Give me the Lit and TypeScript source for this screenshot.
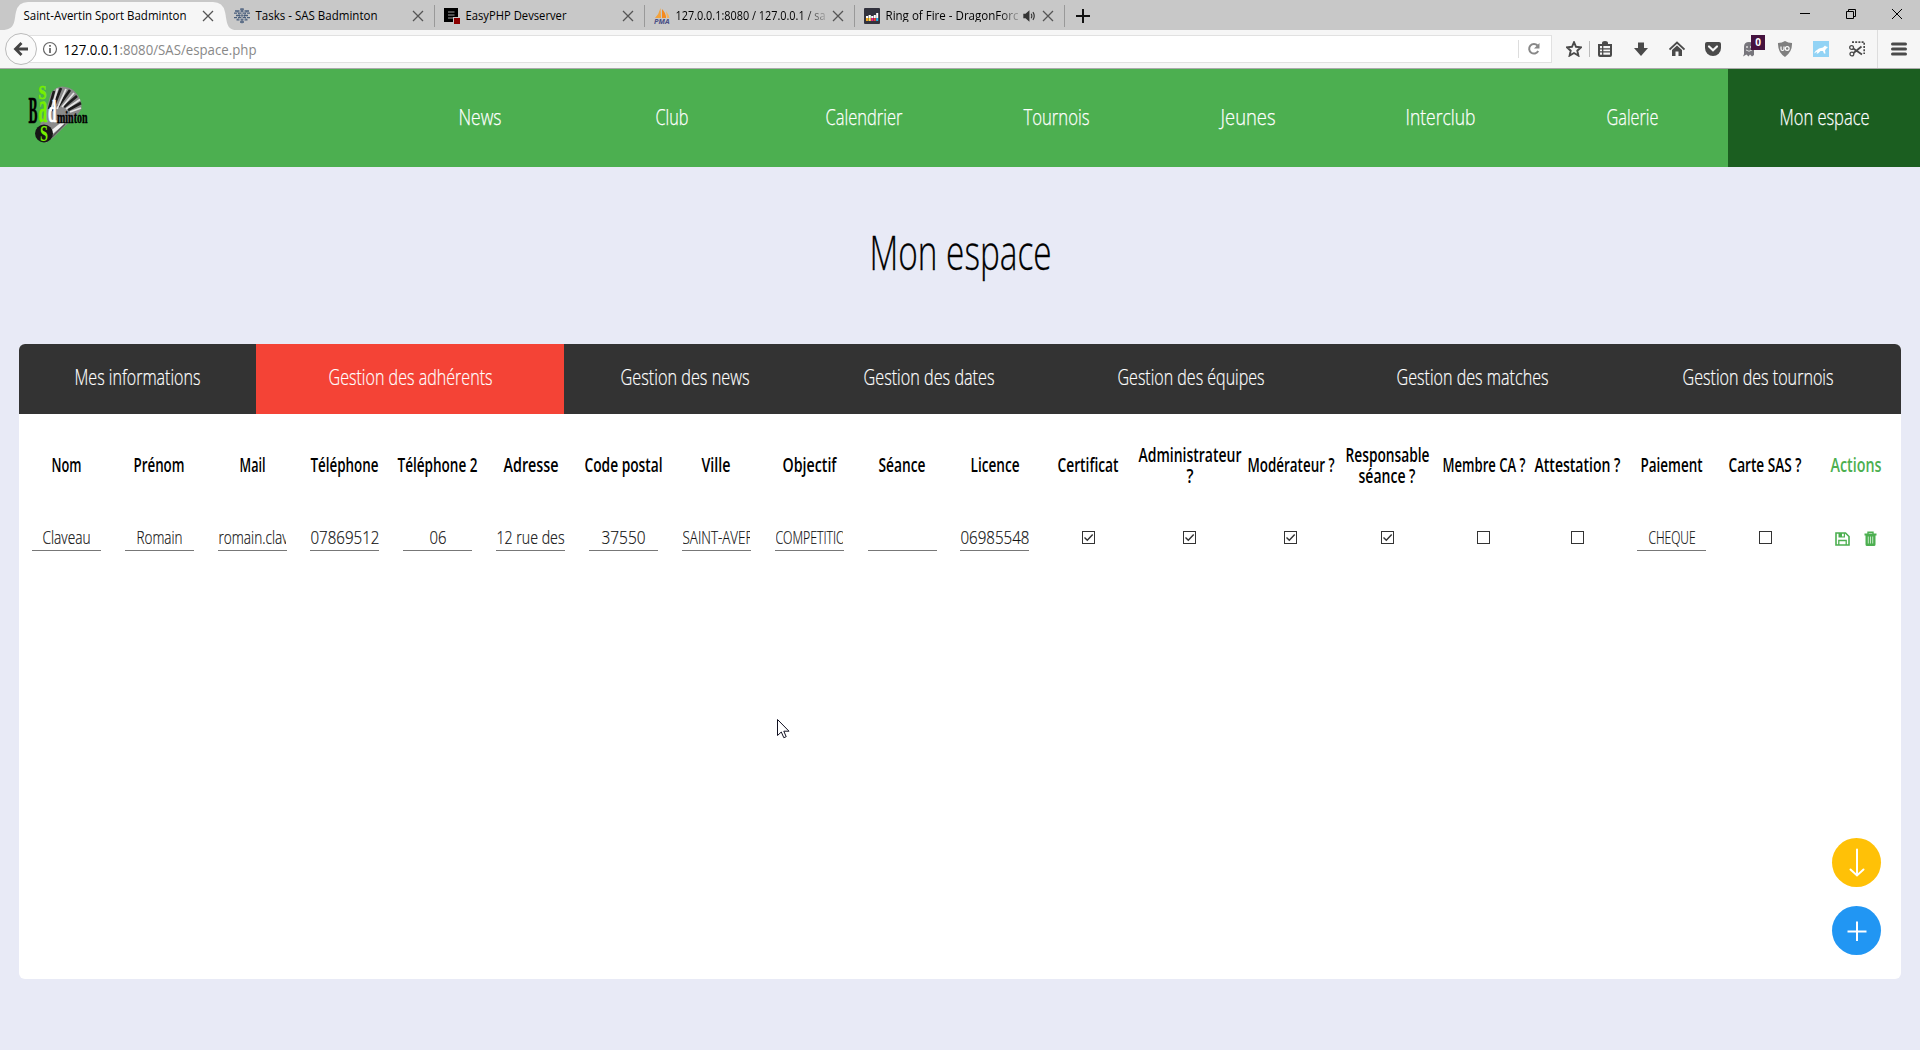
import { LitElement, html, svg, css } from "lit";
import { customElement } from "lit/decorators.js";

// A single line of condensed text: capitals are vertically centred in the box.
const fit = (text: string, w: number, size: number, cls = "", clip = 0) => html`<svg
  class="fit ${cls} ${clip ? "clip" : ""}" width=${clip || w} height=${Math.round(size)}>
  <text x="-0.5" y=${(size * 0.86).toFixed(2)} font-size=${size} textLength=${w + 1} lengthAdjust="spacingAndGlyphs">${text}</text>
</svg>`;

const icon = (body: unknown, s = 16, cls = "") =>
  html`<svg class="icon ${cls}" width=${s} height=${s} viewBox="0 0 16 16">${body}</svg>`;

const cross = icon(svg`<path d="M3 3L13 13M13 3L3 13" stroke="#555" stroke-width="1.3" fill="none"/>`);

const favTasks = icon(svg`<g fill="none" stroke="#4a5f7d" stroke-width="1.300">
  <path d="M6 1.200H10M1 3H5.500M6.500 3H9.500M10.500 3H15M0 5.200H3M4 5.200H7M9 5.200H12M13 5.200H16M2 7.500H6.500M7.300 7.500H8.700M9.500 7.500H14M0 9.700H3M4 9.700H7M9 9.700H12M13 9.700H16M2.500 11.800H5.500M6.500 11.800H9.500M10.500 11.800H13.500M6 14H10"/>
  <path d="M8 0V15.500M3 3L6 8L3 12M13 3L10 8L13 12" stroke-width="0.700"/></g>`);
const favPhp = icon(svg`<path d="M0 0H14V9H9V14H0Z" fill="#000"/><path d="M4 4H10.500M4 7H10.500M4 10H9" stroke="#c8c8c8" stroke-width="0.800"/><rect x="10" y="10" width="6" height="6" fill="#8b0000"/>`);
const favPma = icon(svg`<path d="M6.500 0L7 10H1Q5 6 6.500 0Z" fill="#f2a23c"/><path d="M8 1Q12 5 12 10H8Z" fill="#f58a1f"/><path d="M12 3Q15 7 15.500 10H13Z" fill="#f7b45c"/>
  <text x="0" y="16" font-size="6.200" font-weight="700" font-style="italic" fill="#4a4f86" textLength="15.500" lengthAdjust="spacingAndGlyphs">PMA</text>`);
const favDeezer = icon(svg`<rect width="16" height="16" rx="1" fill="#32323d"/>
  <g fill="#fff"><rect x="2" y="8" width="2.200" height="2"/><rect x="4.600" y="7" width="2.200" height="3"/><rect x="7.200" y="8" width="2.200" height="2"/><rect x="9.800" y="7" width="2" height="3"/><rect x="12.200" y="5" width="2" height="5"/></g>
  <g><rect x="2" y="10" width="2.200" height="3" fill="#f5a623"/><rect x="4.600" y="10" width="2.200" height="3" fill="#ffe14d"/><rect x="7.200" y="10" width="2.200" height="3" fill="#e5218a"/><rect x="9.800" y="10" width="2" height="3" fill="#e8402e"/><rect x="12.200" y="10" width="2" height="3" fill="#27b4e8"/></g>`);
const speaker = icon(svg`<path d="M1.500 5.500H4L8.500 1.500V14.500L4 10.500H1.500Z" fill="#333"/><path d="M10.500 5.500Q12 8 10.500 10.500M12.500 3.500Q15.500 8 12.500 12.500" stroke="#333" stroke-width="1.300" fill="none"/>`, 14);

interface Tab { label: string; w: number; fav?: unknown; active?: boolean; fade?: boolean; sound?: boolean; }
const TABS: Tab[] = [
  { label: "Saint-Avertin Sport Badminton", w: 162, active: true },
  { label: "Tasks - SAS Badminton", w: 121, fav: favTasks },
  { label: "EasyPHP Devserver", w: 100, fav: favPhp },
  { label: "127.0.0.1:8080 / 127.0.0.1 / sa", w: 149, fav: favPma, fade: true },
  { label: "Ring of Fire - DragonForc", w: 132, fav: favDeezer, fade: true, sound: true },
];

@customElement("browser-chrome")
class BrowserChrome extends LitElement {
  static styles = css`
    :host { display: block; font-family: "Open Sans", "Noto Sans", sans-serif; }
    .fit { display: block; overflow: visible; flex: none; }
    .icon { display: block; flex: none; }
    .strip { height: 30px; background: #c8c8c8; display: flex; overflow: hidden; }
    .tab { width: 210px; height: 30px; box-sizing: border-box; display: flex; align-items: center; padding: 1px 9px 0 9px; position: relative; }
    .tab .close { margin-left: auto; }
    .tab .name { margin-left: 6px; }
    .tab.sep::after { content: ""; position: absolute; right: 0; top: 5px; height: 22px; width: 1px; background: #999; }
    .tab.active { width: 225px; padding-left: 24px; }
    .tab.active .name { margin-left: 0; }
    .shape { position: absolute; left: 0; top: 0; }
    .tab > * { z-index: 1; }
    .tab > .shape { z-index: 0; }
    .fade { mask-image: linear-gradient(to right, #000 86%, rgba(0,0,0,.2)); }
    .sound { margin-left: auto; }
    .sound + .close { margin-left: 4px; }
    .plus { margin: 8px 0 0 10px; }
    .win { margin-left: auto; display: flex; gap: 30px; padding: 6px 15px 0 0; }
    .bar { height: 39px; box-sizing: border-box; background: #f6f6f6; border-bottom: 1px solid #aaa; display: flex; align-items: center; padding: 0 13px 0 5px; }
    .back { flex: none; width: 32px; height: 32px; box-sizing: border-box; border: 1px solid #bbb; border-radius: 50%; background: #fafafa; display: flex; align-items: center; justify-content: center; z-index: 1; }
    .url { height: 28px; box-sizing: border-box; border: 1px solid #e1e1e1; background: #fff; width: 1535px; margin-left: -19px; padding: 0 9px 0 23px; display: flex; align-items: center; }
    .info { margin-right: 6px; }
    .host, .path { margin-top: 2px; }
    .path { fill: #888; margin-left: 1px; }
    .reload { margin-left: auto; border-left: 1px solid #ddd; padding-left: 7px; height: 18px; display: flex; align-items: center; }
    .tools { display: flex; align-items: center; margin-left: 14px; }
    .sep1 { width: 1px; height: 16px; background: #bbb; margin: 0 7px 0 7px; }
    .group { display: flex; gap: 20px; }
    .sep2 { width: 1px; height: 38px; background: #ddd; margin: 0 13px 0 12px; }
    .ghost { position: relative; }
    .badge { position: absolute; left: 10px; top: -6px; width: 14px; height: 15px; background: #45123f; color: #fff; font: 700 10px/14px "Open Sans", sans-serif; text-align: center; }
  `;

  render() {
    return html`
      <div class="strip">
        ${TABS.map((t, i) => html`
          <div class="tab ${t.active ? "active" : ""} ${i > 0 ? "sep" : ""}">
            ${t.active ? html`<svg class="shape" width="236" height="30"><path d="M2 30C16 30 14 20 16 12Q18 2 28 2H213Q223 2 225 12C227 20 226 30 236 30Z" fill="#f6f6f6"/></svg>` : t.fav}
            <div class="name ${t.fade ? "fade" : ""}">${fit(t.label, t.w, 12)}</div>
            ${t.sound ? html`<div class="sound">${speaker}</div>` : ""}
            <div class="close">${cross}</div>
          </div>`)}
        <div class="plus">${icon(svg`<path d="M8 1V15M1 8H15" stroke="#111" stroke-width="2"/>`)}</div>
        <div class="win">
          ${icon(svg`<path d="M3 7.500H13" stroke="#000"/>`)}
          ${icon(svg`<path d="M3.500 5.500H10.500V12.500H3.500ZM5.500 5.500V3.500H12.500V10.500H10.500" stroke="#000" fill="none"/>`)}
          ${icon(svg`<path d="M3 3L13 13M13 3L3 13" stroke="#000" fill="none"/>`)}
        </div>
      </div>
      <div class="bar">
        <div class="back">${icon(svg`<path d="M8.500 2L2.500 8L8.500 14M3 8H15" stroke="#444" stroke-width="2.800" fill="none"/>`)}</div>
        <div class="url">
          <div class="info">${icon(svg`<circle cx="8" cy="8" r="6.500" stroke="#666" stroke-width="1.200" fill="none"/><path d="M8 7V12M8 4V5.700" stroke="#555" stroke-width="1.600"/>`)}</div>
          ${fit("127.0.0.1", 55, 14, "host")}${fit(":8080/SAS/espace.php", 136, 14, "path")}
          <div class="reload">${icon(svg`<path d="M12.200 10A4.800 4.800 0 1 1 11.500 4.500" stroke="#888" stroke-width="2" fill="none"/><path d="M13.500 2V7.500H8Z" fill="#888"/>`)}</div>
        </div>
        <div class="tools">
          ${icon(svg`<path d="M8 1.200L10 5.800L15 6.300L11.300 9.700L12.400 14.600L8 12L3.600 14.600L4.700 9.700L1 6.300L6 5.800Z" stroke="#4a4a4a" stroke-width="1.900" fill="none"/>`)}
          <div class="sep1"></div>
          <div class="group">
            ${icon(svg`<path d="M5 3V2Q5 0 8 0Q11 0 11 2V3H15V14Q15 16 13 16H3Q1 16 1 14V3Z" fill="#4a4a4a"/><path d="M3 5H13V13.700H3Z" fill="#f6f6f6"/><path d="M3 7.800H13M3 10.900H13M5.700 5V14" stroke="#4a4a4a" stroke-width="1.300"/>`)}
            ${icon(svg`<path d="M5 1.500H11V7H15L8 15L1 7H5Z" fill="#4a4a4a"/>`)}
            ${icon(svg`<path d="M0.500 8.500L8 1.500L15.500 8.500" stroke="#4a4a4a" stroke-width="1.800" fill="none"/><path d="M3 9L8 4.500L13 9V15H9.500V10.500H6.500V15H3Z" fill="#4a4a4a"/>`)}
            ${icon(svg`<path d="M2 1H14Q16 1 16 3V7A8 8 0 0 1 0 7V3Q0 1 2 1Z" fill="#4a4a4a"/><path d="M4 5.500L8 9.300L12 5.500" stroke="#f6f6f6" stroke-width="2.200" fill="none" stroke-linecap="round"/>`)}
            <div class="ghost">${icon(svg`<path d="M3 13V6Q3 1 8 1Q13 1 13 6V14L11 15.500L9 13.500L7.500 15.500L5.500 13.500L2 15.500Z" fill="#77767c"/><circle cx="6" cy="6" r="1" fill="#ddd"/><circle cx="10" cy="6" r="1" fill="#ddd"/><path d="M5 9Q8 11.500 11 9" stroke="#ddd" fill="none"/>`)}<div class="badge">0</div></div>
            ${icon(svg`<path d="M8 0Q11 2 15 2Q15.500 11 8 16Q0.500 11 1 2Q5 2 8 0Z" fill="#808080"/><path d="M4 5.500V8Q4 9.500 5.500 9.500Q7 9.500 7 8V5.500" stroke="#fff" stroke-width="1.200" fill="none"/><circle cx="10.200" cy="7.500" r="1.900" stroke="#fff" stroke-width="1.200" fill="none"/>`)}
            ${icon(svg`<rect width="16" height="16" fill="#92d3f5"/><path d="M1 12.500Q3 9 6 7.500L10 6.500L12 4.500L13 5.500L15 6L13 8L12 9.500L12.500 12.500H11L10 10H7.500L5 12.500H3.500L4.500 10.500Z" fill="#fff"/>`)}
            ${icon(svg`<path d="M3 1.200H15.200V13" stroke="#4a4a4a" stroke-width="1.700" fill="none" stroke-dasharray="2 1.200"/><circle cx="2.600" cy="6.500" r="1.900" stroke="#4a4a4a" stroke-width="1.300" fill="none"/><circle cx="2.900" cy="13" r="1.900" stroke="#4a4a4a" stroke-width="1.300" fill="none"/><path d="M4.300 7.500L13 13.500M4.500 12L12.500 5.500" stroke="#4a4a4a" stroke-width="1.800"/>`)}
          </div>
          <div class="sep2"></div>
          ${icon(svg`<path d="M1.500 3H14.500M1.500 8H14.500M1.500 13H14.500" stroke="#4a4a4a" stroke-width="3" stroke-linecap="round"/>`)}
        </div>
      </div>`;
  }
}

const NAV: [string, number][] = [
  ["News", 42], ["Club", 32], ["Calendrier", 76], ["Tournois", 65],
  ["Jeunes", 54], ["Interclub", 69], ["Galerie", 51], ["Mon espace", 89],
];

@customElement("site-header")
class SiteHeader extends LitElement {
  static styles = css`
    :host { display: flex; height: 98px; background: #4caf50; font-family: "Open Sans", "Noto Sans", sans-serif; font-weight: 300; }
    .fit { display: block; overflow: visible; fill: #fff; stroke: #fff; stroke-width: .25px; }
    .logo { width: 384px; box-sizing: border-box; padding: 16px 0 0 28px; }
    .word { font-family: "Liberation Serif", serif; font-weight: 700; }
    .item { width: 192px; box-sizing: border-box; padding-bottom: 3px; display: flex; align-items: center; justify-content: center; }
    .item.active { background: #1b5e20; }
  `;
  render() {
    return html`
      <div class="logo">
        <svg width="62" height="60" viewBox="0 0 62 60">
          <path d="M19 22L23 8Q30 0 37 2Q45 3 49 9Q54 15 53.500 24L48 32L36 42L26 52L18 58L12 40Z" fill="#8a8a8a"/>
          <g fill="none">
            <path d="M21 24L26 6M24 26L33 3M30 22L42 5M36 22L49 11M40 25L53 18" stroke="#1c1c1c" stroke-width="2.600"/>
            <path d="M23 26L29.500 3.500M29 24L38 4M34 22L46 8M38 24L52 14.500M42 27L53 23" stroke="#e4e4e4" stroke-width="1.800"/>
            <path d="M22 50L36 38M24 46L34 38" stroke="#f0f0f0" stroke-width="2"/>
            <path d="M24 52L37 39" stroke="#555" stroke-width="1.200"/>
          </g>
          <circle cx="16" cy="48.500" r="9" fill="#161616"/>
          <g class="word">
            <text x="0.500" y="37.500" font-size="37" textLength="9" lengthAdjust="spacingAndGlyphs" fill="#000" stroke="#000" stroke-width="0.600">B</text>
            <text x="10.500" y="13.500" font-size="18" textLength="8" lengthAdjust="spacingAndGlyphs" fill="#76f000" stroke="#76f000" stroke-width="0.500">S</text>
            <text x="10.500" y="37" font-size="44" textLength="9" lengthAdjust="spacingAndGlyphs" fill="#76f000" stroke="#76f000" stroke-width="0.400">a</text>
            <text x="12" y="56" font-size="23" textLength="8" lengthAdjust="spacingAndGlyphs" fill="#76f000">S</text>
            <text x="20" y="36.500" font-size="31" textLength="8.500" lengthAdjust="spacingAndGlyphs" fill="#fff" stroke="#fff" stroke-width="0.500">d</text>
            <text x="29" y="37.500" font-size="17" textLength="30.500" lengthAdjust="spacingAndGlyphs" fill="#000" stroke="#000" stroke-width="0.400">minton</text>
          </g>
        </svg>
      </div>
      ${NAV.map(([l, w], i) => html`<div class="item ${i === 7 ? "active" : ""}">${fit(l, w, 22)}</div>`)}`;
  }
}

const SECTIONS: [string, number, number][] = [
  ["Mes informations", 125, 237], ["Gestion des adhérents", 163, 308], ["Gestion des news", 128, 242],
  ["Gestion des dates", 130, 246], ["Gestion des équipes", 146, 278], ["Gestion des matches", 151, 285],
  ["Gestion des tournois", 150, 286],
];

interface Col { head: [string, number][]; width: number; text?: [string, number]; check?: boolean; actions?: boolean; }
const COLS: Col[] = [
  { head: [["Nom", 29]], width: 93, text: ["Claveau", 47] },
  { head: [["Prénom", 50]], width: 93, text: ["Romain", 45] },
  { head: [["Mail", 25]], width: 93, text: ["romain.clav", 69] },
  { head: [["Téléphone", 67]], width: 92.8, text: ["07869512", 68] },
  { head: [["Téléphone 2", 79]], width: 92.8, text: ["06", 16] },
  { head: [["Adresse", 54]], width: 92.8, text: ["12 rue des", 67] },
  { head: [["Code postal", 77]], width: 92.8, text: ["37550", 43] },
  { head: [["Ville", 28]], width: 92.9, text: ["SAINT-AVER", 70] },
  { head: [["Objectif", 53]], width: 92.9, text: ["COMPETITIO", 69] },
  { head: [["Séance", 46]], width: 92.9, text: ["", 0] },
  { head: [["Licence", 48]], width: 93, text: ["06985548", 68] },
  { head: [["Certificat", 60]], width: 93.1, check: true },
  { head: [["Administrateur", 102], ["?", 6]], width: 110, check: true },
  { head: [["Modérateur ?", 86]], width: 92, check: true },
  { head: [["Responsable", 83], ["séance ?", 56]], width: 101, check: true },
  { head: [["Membre CA ?", 82]], width: 92, check: false },
  { head: [["Attestation ?", 85]], width: 96, check: false },
  { head: [["Paiement", 61]], width: 92, text: ["CHEQUE", 46] },
  { head: [["Carte SAS ?", 72]], width: 95.4, check: false },
  { head: [["Actions", 50]], width: 86, actions: true },
];

@customElement("member-panel")
class MemberPanel extends LitElement {
  static styles = css`
    :host { display: flex; flex-direction: column; height: 635px; border-radius: 6px; overflow: hidden; background: #fff; position: relative; font-family: "Open Sans", "Noto Sans", sans-serif; font-weight: 300; }
    .fit { display: block; overflow: visible; flex: none; }
    .clip { overflow: hidden; }
    .tabs { display: flex; height: 70px; background: #333; fill: #fff; stroke: #fff; stroke-width: .2px; }
    .tab { display: flex; align-items: center; justify-content: center; padding-bottom: 4px; box-sizing: border-box; }
    .tab.active { background: #f44336; }
    .table { display: flex; padding-left: 0.6px; }
    .col { flex: none; display: flex; flex-direction: column; align-items: center; }
    .head { height: 104px; padding-bottom: 1px; box-sizing: border-box; display: flex; flex-direction: column; gap: 2px; align-items: center; justify-content: center; font-weight: 600; }
    .head.green { fill: #4caf50; }
    .cell { height: 39px; display: flex; align-items: center; justify-content: center; }
    .input { width: 69px; height: 26px; box-sizing: border-box; border-bottom: 1px solid #777; margin-top: 1px; padding-bottom: 1px; display: flex; align-items: center; justify-content: center; overflow: hidden; fill: #111; stroke: #111; stroke-width: .2px; }
    .box { display: block; }
    .actions { gap: 14px; padding-top: 1px; }
    .fabs { position: absolute; right: 20px; bottom: 24px; display: flex; flex-direction: column; gap: 19px; }
    .fab { width: 49px; height: 49px; border-radius: 50%; display: flex; align-items: center; justify-content: center; }
    .yellow { background: #ffc107; }
    .blue { background: #2196f3; }
  `;
  private cell(c: Col) {
    if (c.text) {
      const [t, w] = c.text;
      return html`<div class="cell"><div class="input">${t ? fit(t, w, 19, "", w > 68 ? 67 : 0) : ""}</div></div>`;
    }
    if (c.actions) {
      return html`<div class="cell actions">
        <svg width="15" height="14" viewBox="0 0 15 14"><path d="M1 1H10.500L14 4.500V13H1Z" fill="none" stroke="#4caf50" stroke-width="1.600"/><path d="M3.500 1H10V5.500H3.500Z" fill="#4caf50"/><rect x="7" y="1.800" width="1.800" height="2.600" fill="#fff"/><path d="M3.800 13V8.500H11.200V13" fill="none" stroke="#4caf50" stroke-width="1.300"/></svg>
        <svg width="13" height="15" viewBox="0 0 13 15"><path d="M4 3V1.200H9V3" fill="none" stroke="#4caf50" stroke-width="1.400"/><path d="M0.500 2.500H12.500V4.500H11.500V13.500Q11.500 15 10 15H3Q1.500 15 1.500 13.500V4.500H0.500Z" fill="#4caf50"/><path d="M4.300 5.500V12.500M6.500 5.500V12.500M8.700 5.500V12.500" stroke="#d3edd4" stroke-width="0.900"/></svg>
      </div>`;
    }
    return html`<div class="cell"><svg class="box" width="13" height="13"><rect x="0.500" y="0.500" width="12" height="12" fill="#fff" stroke="#333"/>${c.check ? svg`<path d="M2.500 6.500L5.300 9.300L10.700 3.500" fill="none" stroke="#333" stroke-width="1.400"/>` : ""}</svg></div>`;
  }
  render() {
    return html`
      <div class="tabs">${SECTIONS.map(([l, w, tw], i) => html`<div class="tab ${i === 1 ? "active" : ""}" style="width:${tw}px">${fit(l, w, 22)}</div>`)}</div>
      <div class="table">
        ${COLS.map((c) => html`<div class="col" style="width:${c.width}px">
          <div class="head ${c.actions ? "green" : ""}">${c.head.map(([l, w]) => fit(l, w, 19))}</div>
          ${this.cell(c)}
        </div>`)}
      </div>
      <div class="fabs">
        <div class="fab yellow"><svg width="28" height="30" viewBox="0 0 28 30"><path d="M14 1.500V27.500M7.500 21.500L14 27.500L20.500 21.500" stroke="#fff" stroke-width="2" fill="none" stroke-linecap="round"/></svg></div>
        <div class="fab blue"><svg width="20" height="20" viewBox="0 0 20 20"><path d="M10 0.500V20M0.500 10.500H19.500" stroke="#fff" stroke-width="2"/></svg></div>
      </div>`;
  }
}

@customElement("app-root")
class AppRoot extends LitElement {
  static styles = css`
    :host { display: block; width: 1920px; height: 1050px; background: #e8eaf6; overflow: hidden; position: relative; font-family: "Open Sans", "Noto Sans", sans-serif; }
    .fit { display: block; overflow: visible; font-weight: 300; stroke: #000; stroke-width: .3px; }
    .title { height: 177px; padding-bottom: 6px; box-sizing: border-box; display: flex; align-items: center; justify-content: center; }
    .main { padding: 0 19px; }
    .cursor { position: absolute; left: 777px; top: 719px; }
  `;
  render() {
    return html`
      <browser-chrome></browser-chrome>
      <site-header></site-header>
      <div class="title">${fit("Mon espace", 181, 48)}</div>
      <div class="main"><member-panel></member-panel></div>
      <svg class="cursor" width="13" height="20"><path d="M0.500 0.500V16.500L4.300 13L6.800 18.700L9.200 17.700L6.800 12.200H12Z" fill="#fff" stroke="#112" stroke-width="1"/></svg>`;
  }
}
